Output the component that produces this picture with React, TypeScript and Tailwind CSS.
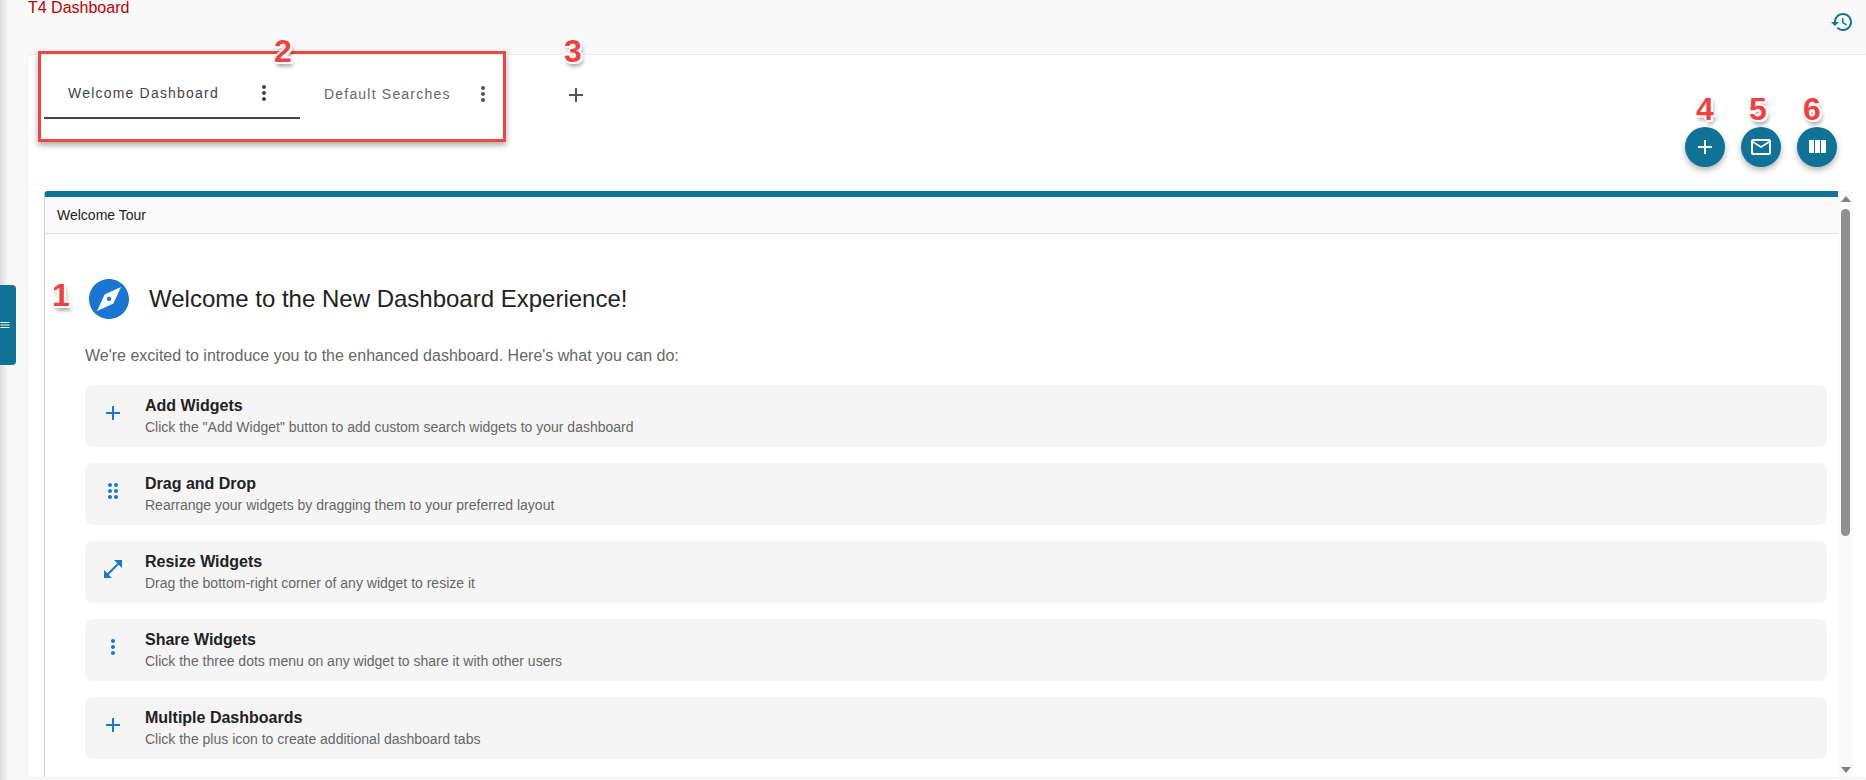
const ICONS = {
  add: "M19 13h-6v6h-2v-6H5v-2h6V5h2v6h6v2z",
  more: "M12 8c1.1 0 2-.9 2-2s-.9-2-2-2-2 .9-2 2 .9 2 2 2zm0 2c-1.1 0-2 .9-2 2s.9 2 2 2 2-.9 2-2-.9-2-2-2zm0 6c-1.1 0-2 .9-2 2s.9 2 2 2 2-.9 2-2-.9-2-2-2z",
  drag: "M11 18c0 1.1-.9 2-2 2s-2-.9-2-2 .9-2 2-2 2 .9 2 2zm-2-8c-1.1 0-2 .9-2 2s.9 2 2 2 2-.9 2-2-.9-2-2-2zm0-6c-1.1 0-2 .9-2 2s.9 2 2 2 2-.9 2-2-.9-2-2-2zm6 4c1.1 0 2-.9 2-2s-.9-2-2-2-2 .9-2 2 .9 2 2 2zm0 2c-1.1 0-2 .9-2 2s.9 2 2 2 2-.9 2-2-.9-2-2-2zm0 6c-1.1 0-2 .9-2 2s.9 2 2 2 2-.9 2-2-.9-2-2-2z",
  resize: "M21 11V3h-8l3.29 3.29-10 10L3 13v8h8l-3.29-3.29 10-10z",
  explore: "M12 10.9c-.61 0-1.1.49-1.1 1.1s.49 1.1 1.1 1.1c.61 0 1.1-.49 1.1-1.1s-.49-1.1-1.1-1.1zM12 2C6.48 2 2 6.48 2 12s4.48 10 10 10 10-4.48 10-10S17.52 2 12 2zm2.19 12.19L6 18l3.81-8.19L18 6l-3.81 8.19z",
  mail: "M20 4H4c-1.1 0-1.99.9-1.99 2L2 18c0 1.1.9 2 2 2h16c1.1 0 2-.9 2-2V6c0-1.1-.9-2-2-2zm0 14H4V8l8 5 8-5v10zm-8-7L4 6h16l-8 5z",
  columns: "M10 18h5V5h-5v13zm-6 0h5V5H4v13zM16 5v13h5V5h-5z",
  history: "M13 3c-4.97 0-9 4.03-9 9H1l3.89 3.89.07.14L9 12H6c0-3.87 3.13-7 7-7s7 3.13 7 7-3.13 7-7 7c-1.93 0-3.68-.79-4.94-2.06l-1.42 1.42C8.27 19.99 10.51 21 13 21c4.97 0 9-4.03 9-9s-4.03-9-9-9zm-1 5v5l4.28 2.54.72-1.21-3.5-2.08V8H12z",
  menu: "M3 18h18v-2H3v2zm0-5h18v-2H3v2zm0-7v2h18V6H3z",
};

function Icon({ d, className }: { d: string; className: string }) {
  return (
    <svg viewBox="0 0 24 24" fill="currentColor" className={className}>
      <path d={d} />
    </svg>
  );
}

const features = [
  { icon: ICONS.add, title: "Add Widgets", text: 'Click the "Add Widget" button to add custom search widgets to your dashboard' },
  { icon: ICONS.drag, title: "Drag and Drop", text: "Rearrange your widgets by dragging them to your preferred layout" },
  { icon: ICONS.resize, title: "Resize Widgets", text: "Drag the bottom-right corner of any widget to resize it" },
  { icon: ICONS.more, title: "Share Widgets", text: "Click the three dots menu on any widget to share it with other users" },
  { icon: ICONS.add, title: "Multiple Dashboards", text: "Click the plus icon to create additional dashboard tabs" },
];

function Fab({ icon }: { icon: string }) {
  return (
    <button className="w-10 h-10 rounded-full bg-[#107296] text-white flex items-center justify-center shadow-[0_3px_6px_rgba(0,0,0,0.3)]">
      <Icon d={icon} className="w-6 h-6" />
    </button>
  );
}

function Marker({ n, className }: { n: number; className: string }) {
  return (
    <span
      className={
        "absolute text-[32px] leading-none font-bold text-[#f04040] [text-shadow:-2px_0_#fff,2px_0_#fff,0_-2px_#fff,0_2px_#fff,-1px_-1px_#fff,2px_2px_#fff,2px_4px_4px_rgba(0,0,0,0.45)] " +
        className
      }
    >
      {n}
    </span>
  );
}

export default function App() {
  return (
    <div className="relative h-[780px] w-[1866px] overflow-hidden flex bg-[#f9f9f9] font-['Liberation_Sans',Arial,sans-serif]">
      {/* left edge of the page, with the drawer handle on top */}
      <div className="w-[28px] shrink-0 bg-gradient-to-r from-[#dcdcdc] via-[#f9f9f9] via-30% to-[#f9f9f9]" />
      <button className="absolute left-0 top-[285px] w-4 h-20 bg-[#107296] rounded-r-[4px] text-white flex items-center">
        <Icon d={ICONS.menu} className="w-3 h-3 ml-[-1px]" />
      </button>

      <div className="flex-1 flex flex-col min-w-0">
        <header className="h-[55px] shrink-0 flex justify-between border-b border-[#f0f0f0]">
          <span className="text-base leading-4 text-[#c00000]">T4 Dashboard</span>
          <Icon d={ICONS.history} className="w-6 h-6 mt-[10px] mr-[12px] text-[#107296]" />
        </header>

        <main className="h-[722px] bg-white rounded-tl-[4px] pl-4 pr-[13px] flex flex-col shadow-[0_0_2px_rgba(0,0,0,0.08)]">
          <div className="h-[136px] shrink-0 flex justify-between">
            <div className="flex items-start pt-[17px]">
              <div className="w-[256px] h-[47px] border-b-2 border-[#444] flex items-center pl-[24px] pb-[3px]">
                <span className="text-sm tracking-[1.2px] text-[#444] w-[184px] whitespace-nowrap">Welcome Dashboard</span>
                <Icon d={ICONS.more} className="w-6 h-6 text-[#444]" />
              </div>
              <div className="w-[200px] h-[47px] flex items-center pl-[24px] pb-[3px]">
                <span className="text-sm tracking-[1.2px] text-[#666] w-[147px] whitespace-nowrap">Default Searches</span>
                <Icon d={ICONS.more} className="w-6 h-6 text-[#555]" />
              </div>
              <Icon d={ICONS.add} className="w-6 h-6 mt-[11px] ml-[64px] text-[#555]" />
            </div>
            <div className="flex gap-4 pt-[72px] pr-[16px]">
              <Fab icon={ICONS.add} />
              <Fab icon={ICONS.mail} />
              <Fab icon={ICONS.columns} />
            </div>
          </div>

          <div className="flex-1 flex min-h-0">
            <section className="flex-1 min-w-0 border-t-[6px] border-t-[#107296] border-l border-l-[#cfcfcf] rounded-tl-[4px] flex flex-col">
              <div className="h-[37px] shrink-0 bg-[#fafafa] border-b border-[#e0e0e0] flex items-center pl-3 text-sm text-[#222]">
                Welcome Tour
              </div>
              <div className="pl-10 pr-[11px] pt-[41px]">
                <div className="flex items-center gap-4">
                  <Icon d={ICONS.explore} className="w-12 h-12 text-[#1976d2]" />
                  <h1 className="text-2xl leading-8 text-[#222]">Welcome to the New Dashboard Experience!</h1>
                </div>
                <p className="mt-[21px] mb-[17px] text-base leading-6 text-[#666]">
                  We're excited to introduce you to the enhanced dashboard. Here's what you can do:
                </p>
                <ul className="flex flex-col gap-4">
                  {features.map((f) => (
                    <li key={f.title} className="h-[62px] bg-[#f5f5f5] rounded-lg flex items-start pl-4 gap-5">
                      <Icon d={f.icon} className="w-6 h-6 mt-4 shrink-0 text-[#1976d2]" />
                      <div className="pt-[10px]">
                        <div className="text-base leading-[22px] font-bold text-[#222]">{f.title}</div>
                        <div className="text-sm leading-5 text-[#666]">{f.text}</div>
                      </div>
                    </li>
                  ))}
                </ul>
              </div>
            </section>

            {/* scrollbar */}
            <div className="w-[15px] shrink-0 bg-[#fafafa] flex flex-col items-center pt-[5px] pb-[4px]">
              <div className="w-0 h-0 border-x-[5px] border-x-transparent border-b-[6px] border-b-[#808080]" />
              <div className="w-[9px] h-[327px] mt-[7px] rounded-full bg-[#8f8f8f]" />
              <div className="flex-1" />
              <div className="w-0 h-0 border-x-[5px] border-x-transparent border-t-[6px] border-t-[#808080]" />
            </div>
          </div>
        </main>
      </div>

      {/* annotations pasted over the screenshot */}
      <div className="absolute left-[38px] top-[51px] w-[468px] h-[91px] border-[3px] border-[#f04545] shadow-[0_3px_6px_rgba(0,0,0,0.35)]" />
      <Marker n={1} className="left-[52px] top-[279px]" />
      <Marker n={2} className="left-[274px] top-[35px]" />
      <Marker n={3} className="left-[564px] top-[35px]" />
      <Marker n={4} className="left-[1696px] top-[93px]" />
      <Marker n={5} className="left-[1749px] top-[93px]" />
      <Marker n={6} className="left-[1803px] top-[93px]" />
    </div>
  );
}
